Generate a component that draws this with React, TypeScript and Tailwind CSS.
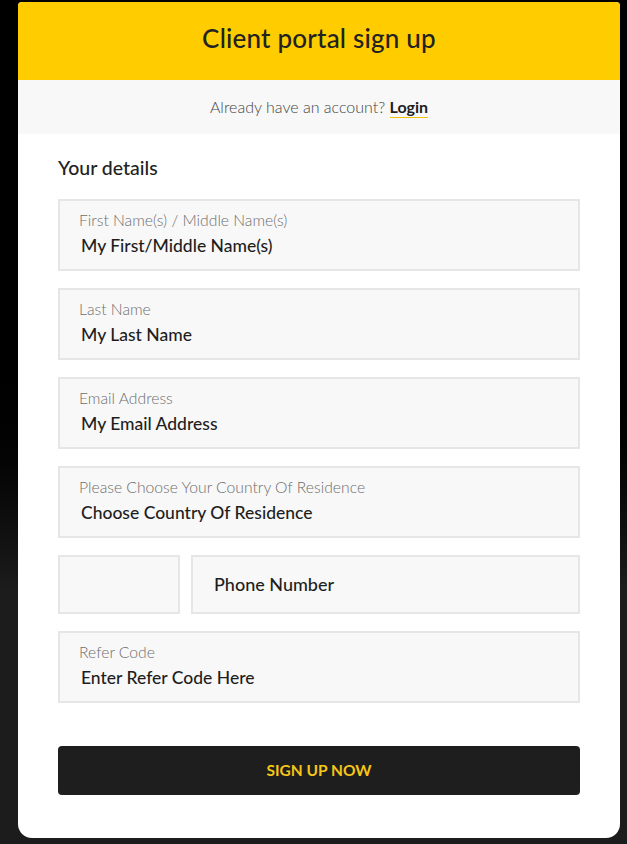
import React from "react";

const fields = [
  { label: "First Name(s) / Middle Name(s)", value: "My First/Middle Name(s)" },
  { label: "Last Name", value: "My Last Name" },
  { label: "Email Address", value: "My Email Address" },
  { label: "Please Choose Your Country Of Residence", value: "Choose Country Of Residence" },
];

function Field({ label, value }: { label: string; value: string }) {
  return (
    <div className="h-[72px] bg-[#f8f8f8] border-2 border-[#e6e6e6] pl-[19px] pt-[9px] flex flex-col">
      <span className="text-[15.7px] leading-[20px] text-[#6e6e6e] font-light">{label}</span>
      <span className="text-[17.5px] leading-[24px] text-[#1e1e1e] ml-[2px] mt-[4px] font-medium">{value}</span>
    </div>
  );
}

export default function App() {
  return (
    <div
      className="min-h-[844px] w-full bg-gradient-to-b from-[#000000] from-40% to-[#1c1c1c] to-70% pt-[2px] pl-[18px] pb-[6px] flex"
      style={{ fontFamily: "Lato, 'Open Sans', sans-serif" }}
    >
      <div className="w-[602px] bg-white rounded-t-[4px] rounded-b-[14px] overflow-hidden flex flex-col">
        {/* header */}
        <div className="h-[78px] bg-[#ffcc00] flex items-center justify-center pb-[5px]">
          <h1 className="text-[26px] font-medium text-[#222] tracking-[0.2px]">Client portal sign up</h1>
        </div>
        <div className="h-[54px] bg-[#f8f8f8] flex items-center justify-center text-[16px] text-[#444] font-light">
          Already have an account?&nbsp;
          <span className="font-bold text-[#1e1e1e] border-b border-[#f2c200] leading-[21px]">Login</span>
        </div>

        {/* form */}
        <div className="px-[40px] pt-[22px] pb-[43px] flex flex-col">
          <h2 className="text-[19.5px] font-medium text-[#222] leading-[24px] mb-[19px]">Your details</h2>
          <div className="flex flex-col gap-[17px]">
            {fields.map((f) => (
              <Field key={f.label} label={f.label} value={f.value} />
            ))}
            <div className="flex gap-[11px]">
              <div className="w-[122px] h-[59px] bg-[#f8f8f8] border-2 border-[#e6e6e6]" />
              <div className="flex-1 h-[59px] bg-[#f8f8f8] border-2 border-[#e6e6e6] flex items-center pl-[21px] text-[18px] font-medium text-[#1e1e1e]">
                Phone Number
              </div>
            </div>
            <Field label="Refer Code" value="Enter Refer Code Here" />
          </div>
          <button className="mt-[43px] h-[49px] w-full bg-[#1e1e1e] rounded-[4px] text-[#f5c518] text-[15.5px] font-bold">
            SIGN UP NOW
          </button>
        </div>
      </div>
    </div>
  );
}
